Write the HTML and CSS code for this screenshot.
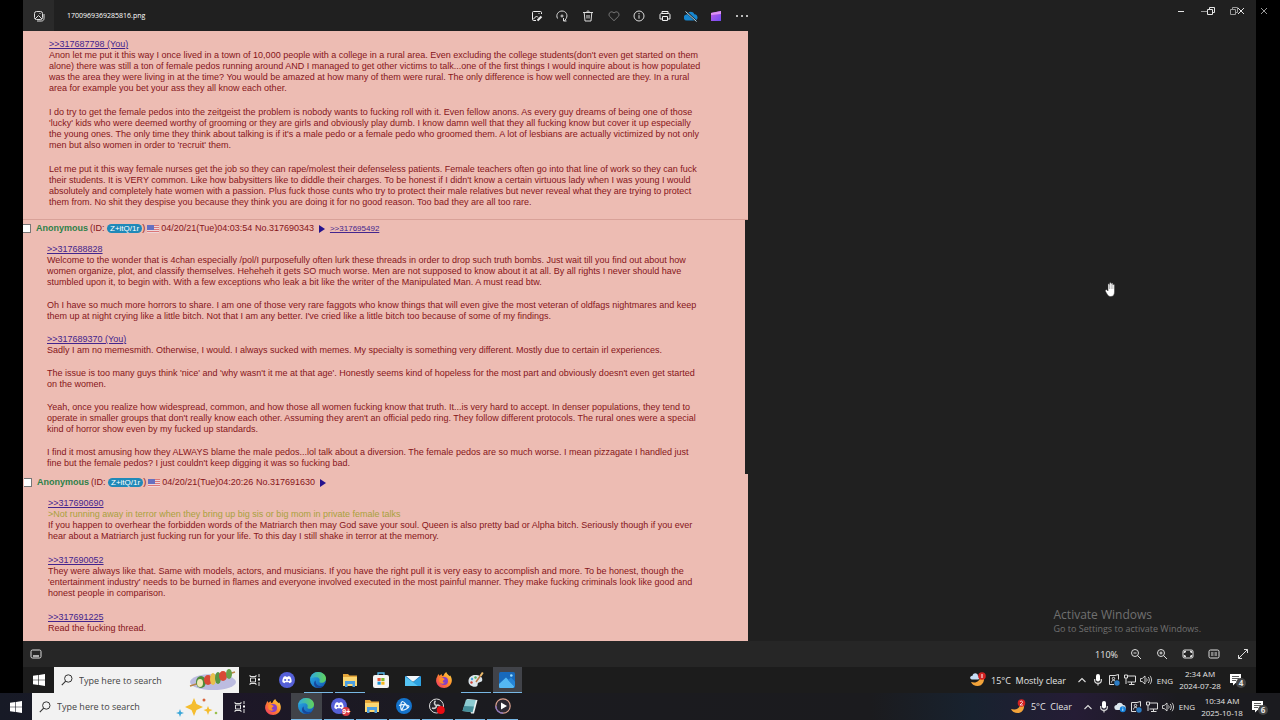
FILE: index.html
```
<!DOCTYPE html>
<html lang="en">
<head>
    <meta charset="UTF-8">
    <meta name="viewport" content="width=device-width, initial-scale=1.0">
    <title>1700969369285816.png</title>
    <link rel="stylesheet" href="styles.css">
</head>
<body>
    <!-- Shared icons -->
    <svg class="defs" aria-hidden="true">
        <defs>
            <linearGradient id="edgeBlue" x1="0" y1="0" x2="1" y2="1"><stop offset="0" stop-color="#2bb3e6"/><stop offset="1" stop-color="#1155b5"/></linearGradient>
            <linearGradient id="edgeGreen" x1="0" y1="0" x2="1" y2="0"><stop offset="0" stop-color="#2fa9e0"/><stop offset="1" stop-color="#62d35a"/></linearGradient>
            <linearGradient id="foxFire" x1="1" y1="0" x2="0" y2="1"><stop offset="0" stop-color="#ffe14a"/><stop offset=".45" stop-color="#ff8a2a"/><stop offset="1" stop-color="#f0306a"/></linearGradient>
            <linearGradient id="clip" x1="0" y1="0" x2="1" y2="1"><stop offset="0" stop-color="#c45be8"/><stop offset="1" stop-color="#6f4cf0"/></linearGradient>
        </defs>
        <symbol id="i-win" viewBox="0 0 12 12"><path fill="#fff" d="M0 1.7 5.4 1v4.7H0zM6 .9 12 0v5.7H6zM0 6.3h5.4V11L0 10.3zM6 6.3h6V12l-6-.9z"/></symbol>
        <symbol id="i-search" viewBox="0 0 12 12"><circle cx="7.3" cy="4.5" r="3.7" fill="none" stroke="#333" stroke-width="1"/><path d="M4.7 7.2.8 11.2" stroke="#333" stroke-width="1.1"/></symbol>
        <symbol id="i-taskview" viewBox="0 0 12 12"><path fill="none" stroke="#ddd" d="M1 1v1.500h6V1M1 11V9.500h6V11M1.500 4h5v4h-5zM10 0v3M10 8v4"/><path fill="#fff" d="M9 4.500h2v2H9z"/></symbol>
        <symbol id="i-discord" viewBox="0 0 16 16"><circle cx="8" cy="8" r="8" fill="#5560d8"/><path fill="#fff" d="M4.700 4.800 6.400 4l.5.8h2.200l.5-.8 1.700.8c1 1.600 1.500 3.300 1.300 5.300-.7.6-1.400.9-2.200 1.100l-.6-1H6.200l-.6 1c-.8-.2-1.500-.5-2.200-1.100-.2-2 .3-3.700 1.300-5.300z"/><circle cx="6.200" cy="8" r="1.100" fill="#5560d8"/><circle cx="9.800" cy="8" r="1.100" fill="#5560d8"/></symbol>
        <symbol id="i-edge" viewBox="0 0 16 16"><circle cx="8" cy="8" r="8" fill="url(#edgeBlue)"/><path fill="url(#edgeGreen)" d="M.2 6.800C1 2.800 4.200 0 8.200 0 12.700 0 16 3 16 6.600c0 2.600-1.800 4.200-4 4.200-1.700 0-2.800-.7-2.600-1.600.8-1.200.2-4-3-4C3.800 5.200 1.400 5.900.2 6.800z"/><path fill="#17489b" d="M5.700 8.500c-.5 3.600 2.500 5.900 5.500 5.600 1.600-.2 2.600-.6 3.600-1.700-1.900 3.200-5.300 4-8 3.200C3.500 14.300 3.200 10 5.700 8.500z"/></symbol>
        <symbol id="i-folder" viewBox="0 0 16 16"><path fill="#e5a63a" d="M1 2h5l1.500 1.500H15V14H1z"/><path fill="#fbd773" d="M1 5h14v9H1z"/><path fill="#4c9fe0" d="M3 9h10v6h-2.500v-3h-5v3H3z"/></symbol>
        <symbol id="i-store" viewBox="0 0 16 16"><path fill="none" stroke="#55b7ea" stroke-width="1.300" d="M5 4V1h6v3"/><rect x="0" y="3" width="16" height="13" rx="2" fill="#f4f4f4"/><path fill="#ea5236" d="M4.500 6h3.200v3H4.500z"/><path fill="#7fba2c" d="M8.300 6h3.200v3H8.300z"/><path fill="#1a93d8" d="M4.500 9.700h3.200v3H4.500z"/><path fill="#f7b61b" d="M8.300 9.700h3.200v3H8.300z"/></symbol>
        <symbol id="i-mail" viewBox="0 0 16 16"><path fill="#1a6fb9" d="M0 4h16v5H0z"/><path fill="#f1f6fa" d="M1 4h14l-7 6z"/><path fill="#2da1e0" d="M0 4.500 8 10l8-5.500V14H0z"/><path fill="#55c4f3" d="M0 4.500 13 14H0z"/></symbol>
        <symbol id="i-firefox" viewBox="0 0 16 16"><path fill="url(#foxFire)" d="M1.300 4.500 2.200 2l1.400 1.700L5.500 2l.6 2 1.600-.6C8 2 9 .8 10.300 0c.3 2 2.200 2.600 3.300 4.300l.4-1C15.300 5 16 6.800 15.800 9c-.4 4-3.700 7-7.700 7-4.500 0-8-3.500-8-7.500 0-1.500.4-2.900 1.200-4z"/><circle cx="8" cy="9" r="4" fill="#8540c9"/><path fill="#ff8d2b" d="M3.300 6C5 5.200 7 5.500 7.700 6.600 9 6.600 8.800 8 7.500 8.200 6 9 6.800 11 9.300 10.600c-2 2.200-5.700 1-6-1.600z"/></symbol>
        <symbol id="i-paint" viewBox="0 0 16 16"><path fill="#dce5ea" d="M7 3c4.500 0 8 2 7.200 5.500-.6 2-3.200 1.300-4.200 2.500-.8 1 .4 3.500-2.500 3.700C3.500 15 .5 12.500.5 9.200.5 5.500 3.500 3 7 3z"/><circle cx="4" cy="7" r="1.200" fill="#4ba6df"/><circle cx="7.500" cy="5.500" r="1.200" fill="#54b05a"/><circle cx="3.500" cy="10.500" r="1.200" fill="#cf4238"/><path d="m8 10 5-7" stroke="#bd7540" stroke-width="1.500"/><path d="m12.500 4 2.300-3.500" stroke="#e9b96c" stroke-width="2"/></symbol>
        <symbol id="i-photos" viewBox="0 0 16 16"><rect width="16" height="16" rx="1.500" fill="#1769bb"/><path fill="#54b8f3" d="M0 12 7 5.500l8 8.500c0 1.500-.5 2-1.500 2H1.500C.5 16 0 15.500 0 14.500z"/><path fill="#2585d8" d="m9 8 3-2.500 4 4v5.500z"/><circle cx="12.300" cy="3.500" r="1.300" fill="#9bdcff"/></symbol>
        <symbol id="i-bnet" viewBox="0 0 16 16"><circle cx="8" cy="8" r="8" fill="#1473cc"/><path fill="none" stroke="#e8f5ff" stroke-width="1.200" d="M5.500 12.200C4 9 4.800 4 6.300 3.500c1.800 0 5.200 4.200 5.200 6.500M3 7.500c2.500-1.300 9.500-1 10 .8.200 1.500-5 4.200-7.500 3.900M9 5.500l-3.500 6.700"/></symbol>
        <symbol id="i-obs" viewBox="0 0 16 16"><circle cx="7.500" cy="8" r="7" fill="#24232a" stroke="#ddd"/><path fill="none" stroke="#ccc" stroke-width="1.600" d="M7.500 7.500c-2.200-.4-2.700-3-1-4.700M7.500 7.500c2-1 4 .5 4.500 2.500M7.500 7.500c0 2.300-2 3.500-4.500 2.500"/><circle cx="11.800" cy="12" r="4" fill="#e90c12"/></symbol>
        <symbol id="i-notepad" viewBox="0 0 16 16"><path fill="#e9f0f0" d="m5 1 10.500 1L12 15.500H9z"/><path fill="#8ccbd2" d="m4 1.500 9.800.5-3.300 12.300L.5 13z"/><path fill="#458f9a" d="m2.200 8 9.700.5-1.400 5.800L.5 13z"/></symbol>
        <symbol id="i-media" viewBox="0 0 16 16"><circle cx="8" cy="8" r="7.200" fill="#2b2731" stroke="#d9a08e" stroke-width="1.200"/><path fill="none" stroke="#8775c9" stroke-width="1.200" d="M8 15.200A7.200 7.200 0 0 1 .8 8"/><path fill="#fff" d="m6 4.500 6 3.500-6 3.500z"/></symbol>
        <symbol id="i-chevron" viewBox="0 0 12 12"><path d="m2.500 8 3.500-3.500L9.500 8" fill="none" stroke="#ddd" stroke-width="1.100"/></symbol>
        <symbol id="i-mic" viewBox="0 0 12 12"><rect x="4" y="0" width="4" height="7.500" rx="2" fill="#fff"/><path d="M2.700 5v1.500C2.700 10.200 9.300 10.200 9.300 6.500V5M6 9v2.500" fill="none" stroke="#ddd" stroke-width="1.200"/></symbol>
        <symbol id="i-meet" viewBox="0 0 12 12"><path d="M7 1.500H1.500v9H6M7 1.500l3.500-1v5" fill="none" stroke="#ddd"/><path d="M3.500 8.500c0-3 4-3 4 0" fill="none" stroke="#ddd"/><circle cx="5.500" cy="4.500" r="1.200" fill="none" stroke="#ddd"/><circle cx="9" cy="9" r="2.700" fill="#2b7cc4"/></symbol>
        <symbol id="i-net" viewBox="0 0 12 12"><path d="M3.500 2h8v6h-8M7.500 8v2.500M5 10.500h5.500M.5 1v3h3V1zM2 4v6" fill="none" stroke="#ddd"/></symbol>
        <symbol id="i-sound" viewBox="0 0 12 12"><path d="M.5 4.500h1.700L5 2v8L2.200 7.500H.5z" fill="none" stroke="#ddd" stroke-width=".9"/><path d="M6.500 4.500c.8 1 .8 2 0 3M8.200 3c1.500 1.800 1.500 4.200 0 6M10 1.800c2 2.500 2 5.900 0 8.400" fill="none" stroke="#ddd" stroke-width=".9"/></symbol>
        <symbol id="i-cloud" viewBox="0 0 12 12"><path fill="#dce7ee" d="M3 9a2.500 2.500 0 0 1-.3-5C3.500 1 8 .8 9 4a2.500 2.500 0 0 1 .5 5z"/><circle cx="8.800" cy="8.300" r="3" fill="#1683dc"/><path d="M8.800 7.800v2M8.800 6.500v.8" stroke="#fff" stroke-width=".8"/></symbol>
        <symbol id="i-note" viewBox="0 0 12 12"><path fill="#fff" d="M0 0h11v9H5.500L3 11.500V9H0z"/><path d="M2 2.500h7M2 4.500h7M2 6.500h4" stroke="#333" stroke-width=".8"/></symbol>
        <symbol id="i-moon" viewBox="0 0 16 16"><path fill="#f2a33a" d="M13.500 3c2 6-1 11-6 11C4.500 14 2 12.500 1 10c5 1.500 9-.5 9.500-6z"/></symbol>
        <symbol id="i-restore" viewBox="0 0 8 8"><path d="M.5 2.500h5v5h-5zM2.500 2.500v-2h5v5h-2" fill="none" stroke="currentColor"/></symbol>
        <symbol id="i-min" viewBox="0 0 8 8"><path d="M1 4.500h6" stroke="currentColor"/></symbol>
        <symbol id="i-close" viewBox="0 0 8 8"><path d="m1 1 6 6M7 1 1 7" stroke="currentColor"/></symbol>
        <symbol id="i-flag" viewBox="0 0 12 8"><path fill="#edd6d9" d="M0 0h12v8H0z"/><path stroke="#db7778" d="M0 .5h12M0 2.500h12M0 4.500h12M0 6.500h12"/><path fill="#6670c0" d="M0 0h7v5H0z"/></symbol>
    </svg>

    <div class="desktop">
        <main class="viewer">
            <header class="titlebar">
                <span class="app-icon"><svg viewBox="0 0 12 12" fill="none" stroke="#ddd"><rect x="1.500" y="1.500" width="8" height="8" rx="2"/><path d="M4 11h4.500c1.500 0 2.500-1 2.500-2.500V4M2 9l3.500-3.500L9 9"/><path d="M6.500 3.500h1"/></svg></span>
                <h1 class="file-name">1700969369285816.png</h1>
                <nav class="tools">
                    <button aria-label="Edit"><svg viewBox="0 0 12 12" fill="none" stroke="#eee"><path d="M10.500 4V2.500c0-.6-.4-1-1-1h-7c-.6 0-1 .4-1 1v7c0 .6.400 1 1 1H5M2 9.500l3.500-3.500 1.500 1.500"/><path d="m6.500 10.500 4-4" stroke-width="2"/><path d="M7.500 3.500h1"/></svg></button>
                    <button aria-label="Rotate"><svg viewBox="0 0 12 12" fill="none" stroke="#ddd"><path d="M1.500 8.500c-2-4 1-7.500 4.500-7.500 4 0 6.200 4 4.200 7.500L8.500 11M7.500 8v3h3"/><circle cx="6" cy="6" r="1"/></svg></button>
                    <button aria-label="Delete"><svg viewBox="0 0 12 12" fill="none" stroke="#ddd"><path d="M1 2.500h10M4.500 2.500c0-2 3-2 3 0M2.200 2.500l.8 8.500h6l.8-8.500M5 5v3.500M7 5v3.500"/></svg></button>
                    <button aria-label="Favourite"><svg viewBox="0 0 12 12" fill="none" stroke="#777"><path d="M6 10.700 1.500 6.300C-.2 4 2.600-.2 6 3c3.400-3.200 6.200 1 4.500 3.300z"/></svg></button>
                    <button aria-label="Info"><svg viewBox="0 0 12 12" fill="none" stroke="#ddd"><circle cx="6" cy="6" r="5"/><path d="M6 5.200v3.500M6 3v1.200"/></svg></button>
                    <button aria-label="Print"><svg viewBox="0 0 12 12" fill="none" stroke="#eee"><path d="M3 3.500v-2h6v2M3 9H1V5c0-1 .5-1.500 1.500-1.500h7C10.500 3.500 11 4 11 5v4H9M3.500 6.500h5v4h-5z"/></svg></button>
                    <button aria-label="Cloud"><svg class="wide" viewBox="0 0 14 12"><path fill="#1686cf" d="M3 10.500a3 3 0 0 1-.3-6C4 1 9 .8 10.300 4.200c4.200.2 4.200 6 .7 6.300z"/><path d="m2 1.500 10 9.500" stroke="#202020" stroke-width="2"/><path d="m1.500 1.500 11 10" stroke="#b8dced"/></svg></button>
                    <button aria-label="Clipchamp"><svg viewBox="0 0 12 12"><path fill="url(#clip)" d="M1 3 11 1v10H1z"/><path fill="#dc90f4" d="m1 3 10-2v3L1 5z"/></svg></button>
                    <button aria-label="More"><svg class="wide" viewBox="0 0 14 12" fill="#eee"><circle cx="2" cy="6" r="1"/><circle cx="7" cy="6" r="1"/><circle cx="12" cy="6" r="1"/></svg></button>
                </nav>
                <div class="controls">
                    <button aria-label="Minimize"><svg><use href="#i-min"/></svg></button>
                    <button aria-label="Restore"><svg><use href="#i-restore"/></svg></button>
                    <button aria-label="Close"><svg><use href="#i-close"/></svg></button>
                </div>
            </header>

            <section class="stage">
                <div class="thread">
                    <article class="post first">
                        <a href="#p317687798">&gt;&gt;317687798 (You)</a>
                        <p>Anon let me put it this way I once lived in a town of 10,000 people with a college in a rural area. Even excluding the college students(don't even get started on them<br>
                        alone) there was still a ton of female pedos running around AND I managed to get other victims to talk...one of the first things I would inquire about is how populated<br>
                        was the area they were living in at the time? You would be amazed at how many of them were rural. The only difference is how well connected are they. In a rural<br>
                        area for example you bet your ass they all know each other.</p>
                        <p>I do try to get the female pedos into the zeitgeist the problem is nobody wants to fucking roll with it. Even fellow anons. As every guy dreams of being one of those<br>
                        'lucky' kids who were deemed worthy of grooming or they are girls and obviously play dumb. I know damn well that they all fucking know but cover it up especially<br>
                        the young ones. The only time they think about talking is if it's a male pedo or a female pedo who groomed them. A lot of lesbians are actually victimized by not only<br>
                        men but also women in order to 'recruit' them.</p>
                        <p>Let me put it this way female nurses get the job so they can rape/molest their defenseless patients. Female teachers often go into that line of work so they can fuck<br>
                        their students. It is VERY common. Like how babysitters like to diddle their charges. To be honest if I didn't know a certain virtuous lady when I was young I would<br>
                        absolutely and completely hate women with a passion. Plus fuck those cunts who try to protect their male relatives but never reveal what they are trying to protect<br>
                        them from. No shit they despise you because they think you are doing it for no good reason. Too bad they are all too rare.</p>
                    </article>

                    <article class="post second" id="p317690343">
                        <div class="post-info">
                            <input type="checkbox" id="c1"><label for="c1" class="name">Anonymous</label>
                            <span>(ID: <span class="uid">Z+itQ/1r</span>)</span>
                            <svg class="flag"><use href="#i-flag"/></svg>
                            <span>04/20/21(Tue)04:03:54 No.317690343</span>
                            <span class="arrow"></span>
                            <a class="backlink" href="#p317695492">&gt;&gt;317695492</a>
                        </div>
                        <a href="#p317688828">&gt;&gt;317688828</a>
                        <p>Welcome to the wonder that is 4chan especially /pol/I purposefully often lurk these threads in order to drop such truth bombs. Just wait till you find out about how<br>
                        women organize, plot, and classify themselves. Heheheh it gets SO much worse. Men are not supposed to know about it at all. By all rights I never should have<br>
                        stumbled upon it, to begin with. With a few exceptions who leak a bit like the writer of the Manipulated Man. A must read btw.</p>
                        <p>Oh I have so much more horrors to share. I am one of those very rare faggots who know things that will even give the most veteran of oldfags nightmares and keep<br>
                        them up at night crying like a little bitch. Not that I am any better. I've cried like a little bitch too because of some of my findings.</p>
                        <a href="#p317689370">&gt;&gt;317689370 (You)</a>
                        <p>Sadly I am no memesmith. Otherwise, I would. I always sucked with memes. My specialty is something very different. Mostly due to certain irl experiences.</p>
                        <p>The issue is too many guys think 'nice' and 'why wasn't it me at that age'. Honestly seems kind of hopeless for the most part and obviously doesn't even get started<br>
                        on the women.</p>
                        <p>Yeah, once you realize how widespread, common, and how those all women fucking know that truth. It...is very hard to accept. In denser populations, they tend to<br>
                        operate in smaller groups that don't really know each other. Assuming they aren't an official pedo ring. They follow different protocols. The rural ones were a special<br>
                        kind of horror show even by my fucked up standards.</p>
                        <p>I find it most amusing how they ALWAYS blame the male pedos...lol talk about a diversion. The female pedos are so much worse. I mean pizzagate I handled just<br>
                        fine but the female pedos? I just couldn't keep digging it was so fucking bad.</p>
                    </article>

                    <article class="post third" id="p317691630">
                        <div class="post-info">
                            <input type="checkbox" id="c2"><label for="c2" class="name">Anonymous</label>
                            <span>(ID: <span class="uid">Z+itQ/1r</span>)</span>
                            <svg class="flag"><use href="#i-flag"/></svg>
                            <span>04/20/21(Tue)04:20:26 No.317691630</span>
                            <span class="arrow"></span>
                        </div>
                        <a href="#p317690690">&gt;&gt;317690690</a>
                        <p><span class="quote">&gt;Not running away in terror when they bring up big sis or big mom in private female talks</span><br>
                        If you happen to overhear the forbidden words of the Matriarch then may God save your soul. Queen is also pretty bad or Alpha bitch. Seriously though if you ever<br>
                        hear about a Matriarch just fucking run for your life. To this day I still shake in terror at the memory.</p>
                        <a href="#p317690052">&gt;&gt;317690052</a>
                        <p>They were always like that. Same with models, actors, and musicians. If you have the right pull it is very easy to accomplish and more. To be honest, though the<br>
                        'entertainment industry' needs to be burned in flames and everyone involved executed in the most painful manner. They make fucking criminals look like good and<br>
                        honest people in comparison.</p>
                        <a href="#p317691225">&gt;&gt;317691225</a>
                        <p>Read the fucking thread.</p>
                    </article>
                </div>
                <div class="watermark">
                    <strong>Activate Windows</strong>
                    <span>Go to Settings to activate Windows.</span>
                </div>
                <svg class="hand" viewBox="0 0 12 15"><path fill="#fff" stroke="#333" stroke-width=".5" d="M3 8V2.500c0-1 1.500-1 1.500 0V1.500c0-1.200 1.700-1.200 1.700 0v.3c0-1 1.700-1 1.700 0v1.200c0-1 1.600-1 1.600 0V10c0 3-1.500 4.500-3.700 4.500-2.300 0-3-1-5.500-5.500C.2 8 1.500 7.300 2.200 8L3 9z"/><path d="M4.500 2.500V7M6.200 2v5M7.900 3v4" stroke="#777" stroke-width=".5"/></svg>
            </section>

            <footer class="statusbar">
                <button aria-label="Filmstrip"><svg viewBox="0 0 12 12" fill="none" stroke="#ddd"><rect x="1" y="2" width="10" height="8" rx="1.500"/><path d="M3 8h6" stroke-width="1.500"/></svg></button>
                <span class="zoom-level">110%</span>
                <button aria-label="Zoom out"><svg viewBox="0 0 12 12" fill="none" stroke="#ddd"><circle cx="5" cy="5" r="3.500"/><path d="m7.500 7.500 3.500 3.500M3.500 5h3"/></svg></button>
                <button aria-label="Zoom in"><svg viewBox="0 0 12 12" fill="none" stroke="#ddd"><circle cx="5" cy="5" r="3.500"/><path d="m7.500 7.500 3.500 3.500M3.500 5h3M5 3.500v3"/></svg></button>
                <button aria-label="Fit"><svg viewBox="0 0 12 12" fill="none" stroke="#ddd"><rect x="1" y="2" width="10" height="8" rx="1.500"/><path stroke-width="1.500" d="M2.500 5V3.500H4M8 3.500h1.500V5M9.500 7v1.500H8M4 8.500H2.500V7"/></svg></button>
                <button aria-label="Actual size"><svg viewBox="0 0 12 12" fill="none" stroke="#ddd"><rect x="1" y="2" width="10" height="8" rx="1.500"/><path d="M4 4v4M8 4v4M6 4.500v1M6 6.500v1"/></svg></button>
                <button class="full-screen" aria-label="Full screen"><svg viewBox="0 0 12 12" fill="none" stroke="#ddd"><path d="M7 1.500h3.500V5M10.500 1.500l-9 9M1.500 7v3.500H5"/></svg></button>
            </footer>
        </main>

        <div class="taskbar inner">
            <button class="start" aria-label="Start"><svg><use href="#i-win"/></svg></button>
            <div class="search">
                <svg class="glass"><use href="#i-search"/></svg>
                <input type="text" aria-label="Search" placeholder="Type here to search">
                <svg class="doodle" viewBox="0 0 48 24"><ellipse cx="24" cy="14" rx="23" ry="8" fill="#bcbce0"/><path d="M1 18 46 4" stroke="#b98547" stroke-width="1.500"/><ellipse cx="12" cy="14" rx="5" ry="6" fill="#4d8b39"/><ellipse cx="11" cy="15" rx="3" ry="4" fill="#efe9b6"/><ellipse cx="19" cy="12" rx="4" ry="5" fill="#d84836"/><ellipse cx="24" cy="11" rx="3" ry="6" fill="#e8c04c"/><ellipse cx="29" cy="10" rx="3" ry="6" fill="#569644"/><ellipse cx="34" cy="8" rx="4" ry="5" fill="#d84836"/><ellipse cx="40" cy="6" rx="3" ry="5" fill="#68a04a"/></svg>
            </div>
            <button class="task-view" aria-label="Task view"><svg><use href="#i-taskview"/></svg></button>
            <div class="apps">
                <button aria-label="Discord"><svg><use href="#i-discord"/></svg></button>
                <button class="open" aria-label="Edge"><svg><use href="#i-edge"/></svg></button>
                <button class="open" aria-label="Explorer"><svg><use href="#i-folder"/></svg></button>
                <button aria-label="Store"><svg><use href="#i-store"/></svg></button>
                <button aria-label="Mail"><svg><use href="#i-mail"/></svg></button>
                <button aria-label="Firefox"><svg><use href="#i-firefox"/></svg></button>
                <button class="open" aria-label="Paint"><svg><use href="#i-paint"/></svg></button>
                <button class="open active" aria-label="Photos"><svg><use href="#i-photos"/></svg></button>
            </div>
            <div class="tray">
                <span class="weather"><svg viewBox="0 0 16 16"><use href="#i-moon"/><path fill="#c6dcf5" d="M2 7.500c-3-.3-2-4 .5-3.700C3.500 0 8 1 8 4c2 .2 2 3.300 0 3.500z"/><circle cx="12" cy="4" r="3.800" fill="#d22222"/><path d="M12 2v4" stroke="#fff"/></svg>15°C&nbsp; Mostly clear</span>
                <svg><use href="#i-chevron"/></svg>
                <svg><use href="#i-mic"/></svg>
                <svg><use href="#i-meet"/></svg>
                <svg><use href="#i-net"/></svg>
                <svg><use href="#i-sound"/></svg>
                <span class="lang">ENG</span>
                <span class="clock">2:34 AM<br>2024-07-28</span>
                <span class="notify"><svg><use href="#i-note"/></svg><b>4</b></span>
            </div>
        </div>
    </div>

    <div class="taskbar outer">
        <button class="start" aria-label="Start"><svg><use href="#i-win"/></svg></button>
        <div class="search">
            <svg class="glass"><use href="#i-search"/></svg>
            <input type="text" aria-label="Search" placeholder="Type here to search">
            <svg class="doodle" viewBox="0 0 48 24"><path fill="#f5bd2e" d="m21 3 2.500 6 6.500 3-6.500 3L21 21l-2.500-6-6.500-3 6.500-3zM35 11l1.200 3 3.300 1-3.300 1.500L35 20l-1.200-3.500-3.300-1.500 3.300-1z"/><path fill="#38a6d8" d="m7 14 1 3 3 1-3 1-1 3-1-3-3-1 3-1z"/><circle cx="31" cy="5" r="1.500" fill="#d9633b"/><circle cx="43" cy="18" r="1.300" fill="#9ac04f"/></svg>
        </div>
        <button class="task-view" aria-label="Task view"><svg><use href="#i-taskview"/></svg></button>
        <div class="apps">
            <button aria-label="Firefox"><svg><use href="#i-firefox"/></svg></button>
            <button class="open active" aria-label="Edge"><svg><use href="#i-edge"/></svg></button>
            <button class="open" aria-label="Discord"><svg><use href="#i-discord"/></svg><b class="badge">9+</b></button>
            <button class="open" aria-label="Explorer"><svg><use href="#i-folder"/></svg></button>
            <button class="open" aria-label="Battle.net"><svg><use href="#i-bnet"/></svg></button>
            <button class="open" aria-label="OBS"><svg><use href="#i-obs"/></svg></button>
            <button class="open" aria-label="Notepad"><svg><use href="#i-notepad"/></svg></button>
            <button class="open" aria-label="Media player"><svg><use href="#i-media"/></svg></button>
        </div>
        <div class="tray">
            <span class="weather"><svg viewBox="0 0 16 16"><use href="#i-moon"/><circle cx="11.500" cy="4" r="3.800" fill="#d22222"/><path d="M10 3c.5-1.500 3-1 2.500.5L10 6h3" fill="none" stroke="#fff" stroke-width=".8"/></svg>5°C&nbsp; Clear</span>
            <svg><use href="#i-chevron"/></svg>
            <svg><use href="#i-mic"/></svg>
            <svg><use href="#i-cloud"/></svg>
            <svg><use href="#i-meet"/></svg>
            <svg><use href="#i-net"/></svg>
            <svg><use href="#i-sound"/></svg>
            <span class="lang">ENG</span>
            <span class="clock">10:34 AM<br>2025-10-18</span>
            <span class="notify"><svg><use href="#i-note"/></svg><b>6</b></span>
        </div>
    </div>

    <!-- Controls of the outer window, over the inner one -->
    <div class="controls outer-controls">
        <button aria-label="Minimize window"><svg><use href="#i-min"/></svg></button>
        <button aria-label="Restore window"><svg><use href="#i-restore"/></svg></button>
        <button aria-label="Close window"><svg><use href="#i-close"/></svg></button>
    </div>
</body>
</html>
```
FILE: styles.css
```
* {
    margin: 0;
    padding: 0;
    box-sizing: border-box;
}

body {
    display: flex;
    flex-direction: column;
    min-height: 100vh;
    position: relative;
    background: #000;
    color: #e4e4e4;
    font-family: "Open Sans", "Noto Sans", sans-serif;
    font-size: 9px;
}

button {
    display: flex;
    align-items: center;
    justify-content: center;
    background: none;
    border: none;
    color: inherit;
}

svg {
    display: block;
    flex: none;
    width: 12px;
    height: 12px;
}

.defs {
    position: absolute;
    width: 0;
    height: 0;
}

.desktop {
    flex: 1;
    display: flex;
    flex-direction: column;
    margin: 0 24px 0 23px;
    background: #202020;
}

.viewer {
    flex: 1;
    display: flex;
    flex-direction: column;
}

/* Title bar */
.titlebar {
    display: flex;
    align-items: center;
    height: 31px;
    position: relative;
}

.app-icon {
    display: flex;
    align-items: center;
    justify-content: center;
    width: 31px;
    height: 31px;
    background: #2a2a2a;
}

.file-name {
    flex: 1;
    margin-left: 13px;
    font-size: 7px;
    font-weight: 400;
    color: #fff;
}

.tools {
    display: grid;
    grid-template-columns: repeat(9, 1fr);
    width: 231px;
    margin-right: 501px;
}

.wide {
    width: 14px;
}

.controls {
    position: absolute;
    top: 6px;
    right: 0;
    display: flex;
}

.controls button {
    width: 30px;
    height: 9px;
}

.controls svg {
    width: 8px;
    height: 8px;
}

.outer-controls {
    right: 1px;
    color: #999;
}

/* Opened picture */
.stage {
    flex: 1;
    display: flex;
    justify-content: space-between;
    position: relative;
}

.thread {
    width: 725px;
    color: #861419;
    font-family: "Liberation Sans", Arial, sans-serif;
    font-size: 9px;
    line-height: 11px;
    white-space: nowrap;
}

.post {
    padding: 2px 0 5px 24px;
    background: #edbcb3;
}

.post a {
    display: block;
    width: fit-content;
    color: #43258e;
}

.post p {
    margin-bottom: 13px;
}

.post.second p {
    margin-bottom: 12px;
}

.post p:last-child,
.post.second p:last-child {
    margin-bottom: 0;
}

.post.first {
    padding: 8px 0 11px 26px;
    border-bottom: 1px solid #d8a198;
}

.post.second {
    margin-right: 3px;
}

.post.third {
    padding: 2px 0 7px 25px;
}

.post-info {
    display: flex;
    align-items: center;
    height: 13px;
    margin: 0 0 9px -24px;
    gap: 2px;
}

.post-info input {
    appearance: none;
    width: 8px;
    height: 9px;
    margin-right: 3px;
    background: #fff;
    border: 1px solid #777;
    border-left: none;
}

.name {
    color: #2d8049;
    font-weight: 700;
}

.uid {
    display: inline-block;
    padding: 0 3px;
    border-radius: 5px;
    background: #2089b8;
    color: #fff;
    font-size: 8px;
    line-height: 9px;
}

.flag {
    width: 12px;
    height: 8px;
}

.arrow {
    margin: 0 3px;
    border: 4px solid transparent;
    border-left: 6px solid #24128e;
    border-right: none;
}

.post-info .backlink {
    font-size: 8px;
}

.quote {
    color: #a9a13d;
}

.watermark {
    align-self: flex-end;
    display: flex;
    flex-direction: column;
    margin: 0 55px 5px 0;
    color: #707070;
    font-size: 9px;
    line-height: 14px;
}

.watermark strong {
    font-size: 12px;
    font-weight: 400;
}

.hand {
    position: absolute;
    top: 251px;
    right: 139px;
    width: 12px;
    height: 15px;
}

/* Zoom bar */
.statusbar {
    display: flex;
    align-items: center;
    height: 26px;
    background: #262626;
}

.statusbar button {
    width: 26px;
}

.zoom-level {
    margin: 0 5px 0 auto;
}

.statusbar .full-screen {
    margin-left: 3px;
}

/* Task bars */
.taskbar {
    display: flex;
    height: 26px;
    background: #1c1c1c;
}

.start {
    width: 31px;
}

.search {
    display: flex;
    align-items: center;
    width: 185px;
    padding: 0 2px 0 7px;
    background: #f2f2f2;
}

.search input {
    flex: 1;
    min-width: 0;
    margin-left: 6px;
    background: none;
    border: none;
    font-family: inherit;
    font-size: 9px;
}

.search input::placeholder {
    color: #444;
}

.doodle {
    width: 48px;
    height: 24px;
}

.task-view {
    width: 32px;
}

.apps {
    display: grid;
    grid-template-columns: repeat(8, 1fr);
    width: 252px;
}

.apps button {
    position: relative;
    margin: 0 1px;
}

.apps svg {
    width: 16px;
    height: 16px;
}

.open {
    border-bottom: 1px solid #78b7e4;
}

.active {
    background: #414349;
}

.badge {
    position: absolute;
    right: 4px;
    bottom: 3px;
    border-radius: 5px;
    background: #d83a43;
    color: #fff;
    font-size: 7px;
    line-height: 9px;
}

.tray {
    display: flex;
    align-items: center;
    gap: 4px;
    margin-left: auto;
}

.weather {
    display: flex;
    align-items: center;
    gap: 5px;
    margin-right: 6px;
}

.weather svg {
    width: 16px;
    height: 16px;
}

.lang {
    width: 18px;
    font-size: 8px;
    text-align: center;
}

.clock {
    width: 44px;
    font-size: 8px;
    line-height: 12px;
    text-align: center;
}

.notify {
    position: relative;
    width: 30px;
    padding-left: 4px;
}

.notify b {
    position: absolute;
    top: 4px;
    left: 10px;
    width: 10px;
    border-radius: 5px;
    background: #444;
    font-size: 8px;
    line-height: 10px;
    text-align: center;
}

.outer {
    height: 27px;
    background: linear-gradient(90deg, #171a26 0%, #1d1728 18%, #1b1b20 35%, #1b1b1e 68%, #18222f 76%, #251c35 84%, #1b1b1f 92%);
}

.outer .start {
    width: 32px;
}

.outer .search {
    width: 191px;
}

.outer .task-view {
    width: 34px;
}

.outer .apps {
    width: 262px;
}

.outer .tray {
    margin-right: 2px;
}
```
